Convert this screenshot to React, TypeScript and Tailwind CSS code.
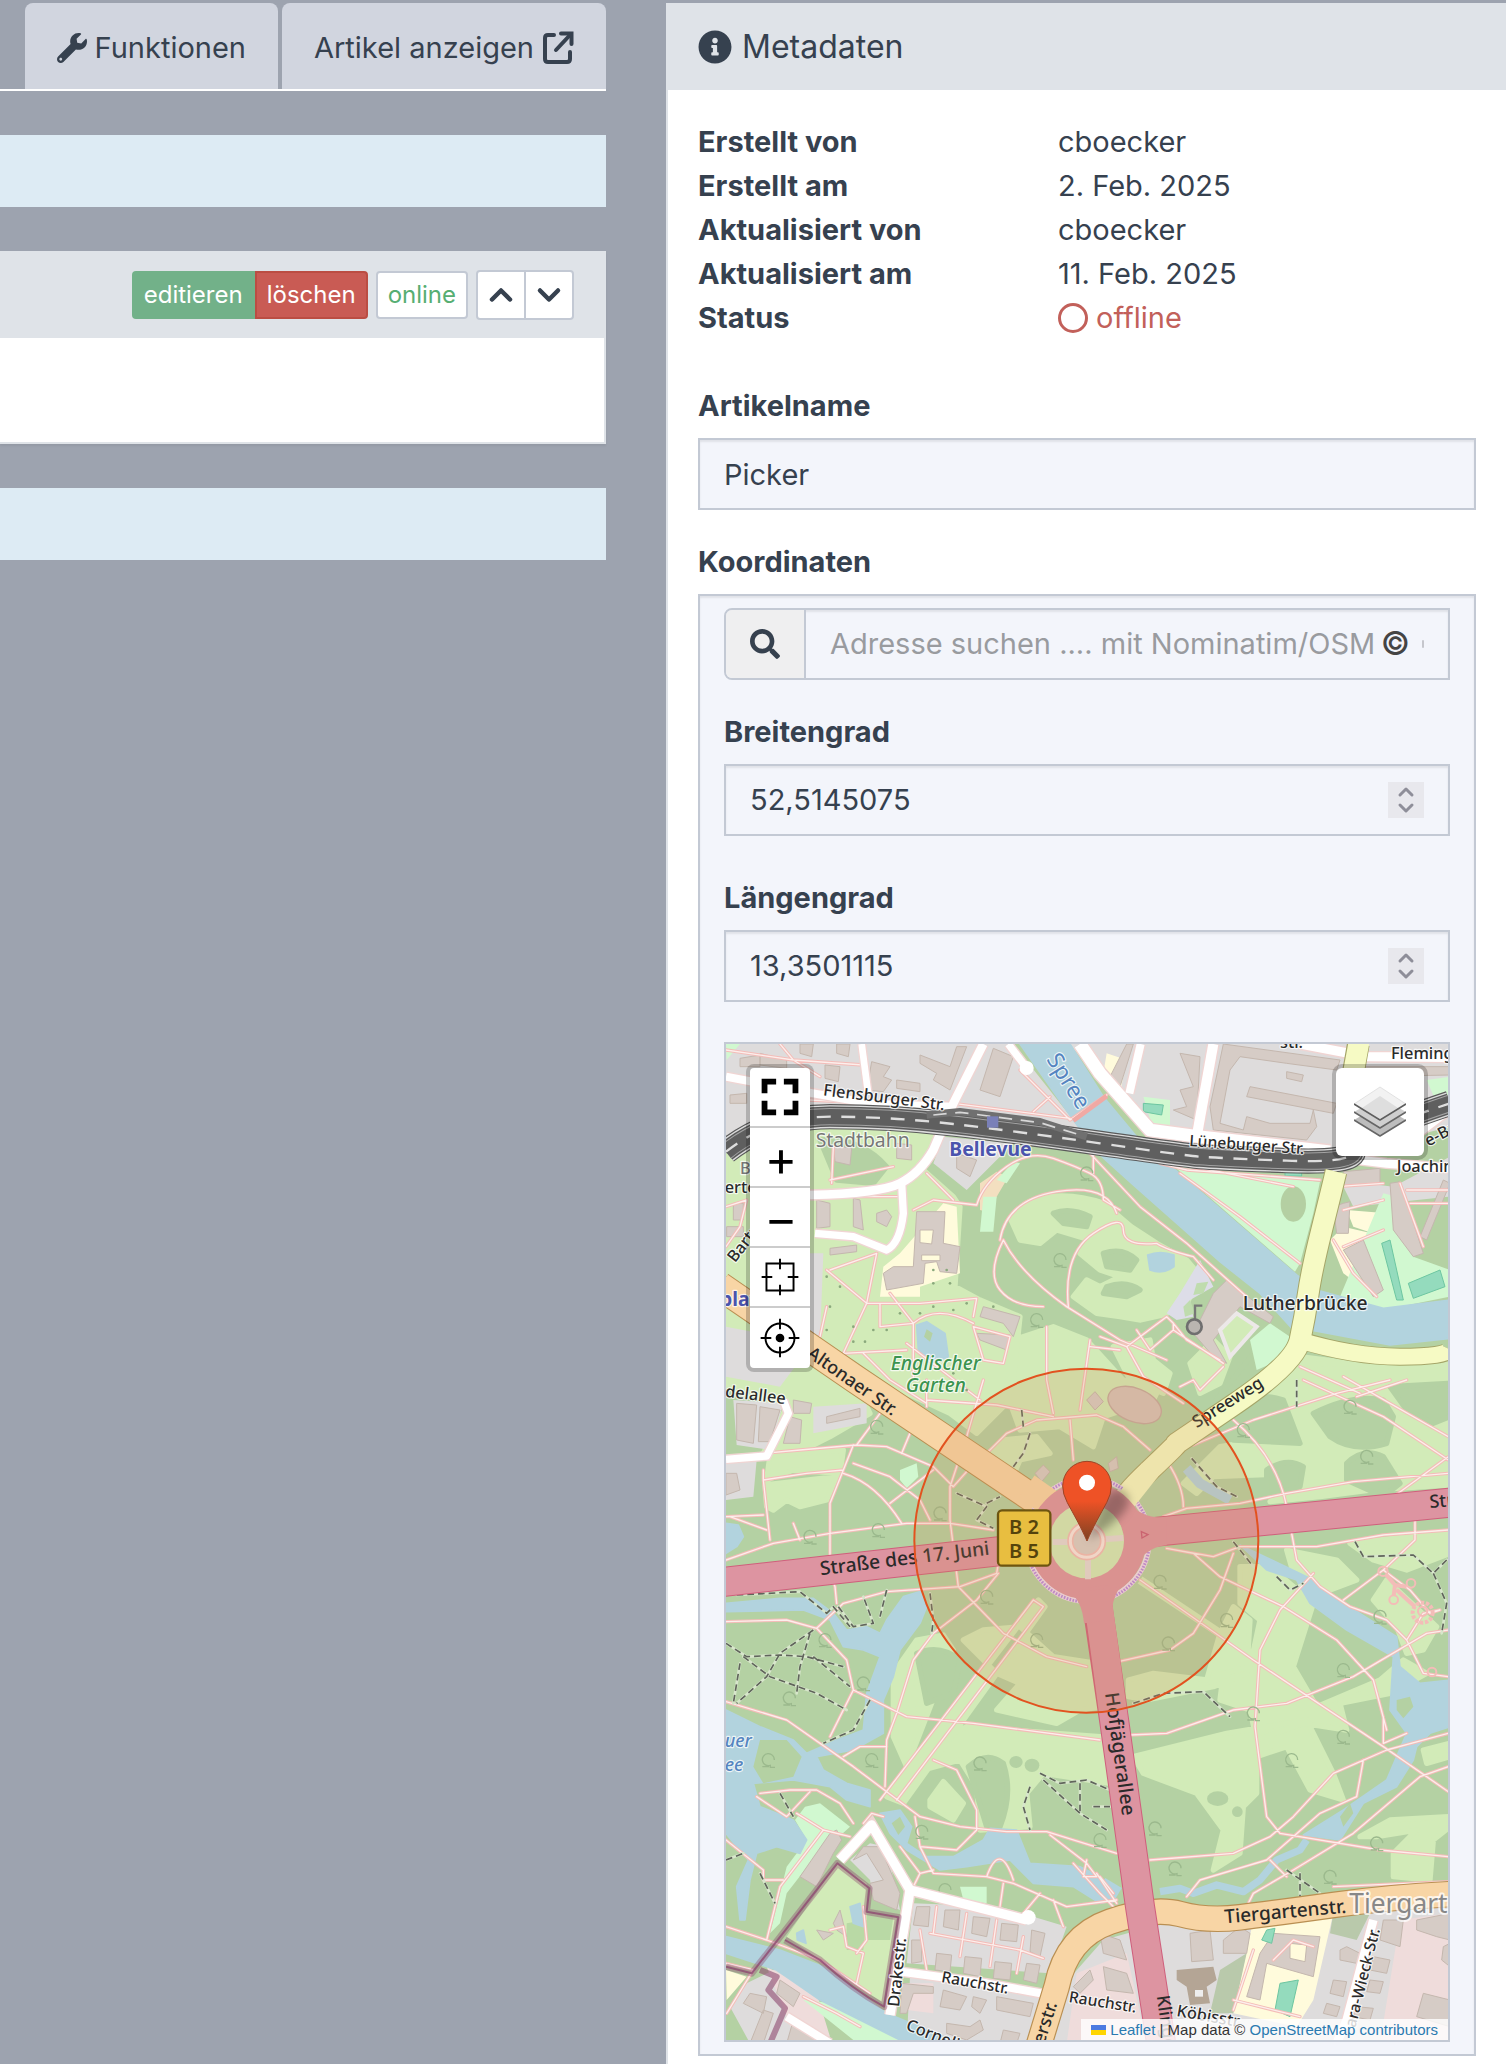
import React from "react";
import { FaWrench, FaInfoCircle, FaSearch } from "react-icons/fa";
import { ChevronDown, ChevronUp } from "lucide-react";

const meta = [
  ["Erstellt von", "cboecker"],
  ["Erstellt am", "2. Feb. 2025"],
  ["Aktualisiert von", "cboecker"],
  ["Aktualisiert am", "11. Feb. 2025"],
];

function ExternalIcon() {
  return (
    <svg viewBox="0 0 32 34" className="h-[34px] w-8" fill="none" stroke="currentColor" strokeWidth="4" strokeLinejoin="round" strokeLinecap="round">
      <path d="M12 4H6Q3 4 3 7V28Q3 31 6 31H25Q28 31 28 28V21" />
      <path d="M14 19 28 4" />
      <path d="M19 2.500H29.500V13" strokeLinejoin="miter" />
    </svg>
  );
}

/* ---------- Map data (map units: three per pixel) ---------- */

const grass = [
  "M18 350 270 270 640 285 610 390 700 470 720 500 705 740 780 780 900 830 880 1020 860 1090 770 1180 690 1120 560 1060 400 950 18 700Z",
  "M18 800 130 880 300 980 420 1060 450 1120 330 1190 250 1230 130 1240 200 1100 18 1040Z",
  "M150 1245 370 1230 360 1300 220 1290 140 1320Z",
  "M135 1335 350 1310 320 1380 240 1400 200 1380 160 1410 140 1400Z",
  "M873 540Q900 480 984 470T1151 490L1234 560 1310 610 1400 660 1443 710 1400 790 1330 825 1262 840 1200 830 1130 820 1060 770 1100 720 1140 740 1200 710 1140 690 1080 640 1110 600 1010 570 960 610 900 600Z",
  "M880 900 1000 860 1100 900 1210 1020 1320 1040 1300 1080 1150 1130 1120 1220 1020 1160 900 1170 860 1060Z",
  "M1410 970 1480 900 1530 950 1500 1030 1440 1060Z",
  "M1180 920 1290 900 1300 960 1350 1000 1330 1060 1230 1020Z",
  "M780 1260 850 1200 950 1190 990 1240 900 1260 870 1330Z",
  "M1560 1100 1740 950 1900 970 2190 980V1335L1950 1350 1800 1370 1650 1385 1710 1340 1740 1300 1480 1310 1430 1360 1390 1330 1500 1220 1560 1210Z",
  "M1730 975 2190 960V1140L2110 1150Z",
  "M1700 1530 1850 1560 1910 1620 1830 1650 1760 1640 1720 1600Z",
  "M1890 1510 2190 1475V1540L2060 1590 1960 1560Z",
  "M2000 1620 2150 1760 2110 1830 2060 1840 2030 1760 1960 1680Z",
  "M1560 1580 1650 1580 1780 1690 1720 1880 1790 2000 1980 1920 2050 1860 2120 1900 2010 1960 1860 1990 1880 2070 1750 2050 1610 2100 1590 2010 1500 1980 1510 1900 1590 1880 1620 1740 1560 1690Z",
  "M1540 1700 1590 1740 1580 1900 1480 1940 1280 1980 1225 1970 1225 1920 1300 1900 1460 1920 1500 1780Z",
  "M1240 2150 1520 2080 1760 2040 1840 2200 1870 2280 1770 2250 1700 2120 1610 2150 1610 2260 1570 2300 1560 2440 1480 2490 1510 2370 1430 2260 1270 2200Z",
  "M1920 2390 2010 2340 2190 2330V2360L2140 2400 2130 2520 2020 2510 2020 2440 2090 2370 1970 2390Z",
  "M2110 2130 2190 2110V2150L2120 2170Z",
  "M955 1680 500 2270 550 2290 975 1700Z",
  "M520 1900 590 1800 670 1785 700 1830 610 1870 590 1930 620 2010 520 2000Z",
  "M730 1800 790 1770 900 1760 1000 1850 1130 1870 1150 2000 1080 2010 1010 2050 830 2010 900 1930 830 1900Z",
  "M610 2190 700 2080 740 2060 1140 2090 1170 2230 970 2200 920 2260 930 2360 780 2370 770 2240 720 2160Z",
  "M630 2280 670 2225 730 2290 700 2340 630 2300Z",
  "M520 1910 650 1950 600 2080 560 2180 520 2090Z",
];

const forest = [
  "M1780 1120Q1900 1060 1990 1080L2020 1130 2000 1210Q1900 1240 1830 1190Z",
  "M1880 1270Q1930 1220 1990 1250L2040 1330 1990 1370 1880 1320Z",
  "M2010 1040 2190 1030V1130L2140 1150 2060 1110Z",
  "M1540 1110Q1600 1050 1690 1080L1740 1210 1540 1200Z",
  "M1640 1290Q1700 1250 1750 1280L1740 1340 1640 1370Z",
  "M745 2180Q800 2130 850 2170Q880 2260 840 2360H800Z",
  "M590 1840Q660 1810 720 1860L700 1960 620 1990Z",
  "M1600 940 1720 960 1590 1080 1480 1090Z",
  "M300 300Q420 290 500 380L460 430 350 420Z",
  "M1000 520Q1050 500 1110 530L1100 560 1030 550Z",
  "M1150 640Q1210 620 1250 660L1230 690 1160 680Z",
  "M1160 740Q1220 720 1260 750L1220 770 1150 760Z",
];

const mint = [
  "M1340 360 1500 395 1800 425 1780 520 1740 670 1725 695Z",
  "M1270 170 1350 180 1350 260 1300 270Z",
  "M1590 900 1650 850 1710 890 1680 960 1610 990Z",
  "M1990 460 2030 470 2080 650 2190 690V770L1990 810 1860 770Z",
  "M780 575 790 470 830 470 820 575Z",
  "M830 420 880 365 900 370 860 430Z",
  "M255 2300 300 2290 390 2360 270 2470 200 2560 180 2650 150 2680 200 2480 260 2400 225 2340Z",
  "M250 2880 340 2890 560 3000H400Z",
  "M720 2540 800 2540 800 2590 730 2580Z",
  "M540 1290 590 1270 595 1310 560 1345 540 1320Z",
  "M18 12H60L20 60Z",
  "M2120 120 2190 110V160L2150 190Z",
];

const greys = [
  "M18 12H880L1060 240 1130 290 270 200 18 320Z",
  "M670 290 880 310 740 450 640 370Z",
  "M1050 12H2190V260L1840 350 1330 340 1180 170Z",
  "M1860 420 2020 440 2190 350V470L1900 500Z",
  "M18 860 120 880 240 960 180 1040 18 1010Z",
  "M40 1080 190 1090 150 1230 50 1215Z",
  "M280 1100 440 1090 440 1150 280 1180Z",
  "M18 1260 110 1260 100 1370 18 1380Z",
  "M580 2590 840 2600 1040 2660 990 2800 560 2770Z",
  "M1330 2650 1820 2610 2190 2580V3010H560L570 2810 1000 2870 1150 2700Z",
  "M390 2460 450 2410 500 2420 540 2610 460 2580 450 2520Z",
  "M80 2830 180 2780 270 2870 240 3010H90L30 2900Z",
  "M270 640 310 640 300 900 270 900Z",
];

const pinks = [
  "M550 2830 640 2830 640 2920 560 2910Z",
  "M2040 2640 2190 2620V3010H1980Z",
  "M1070 2800 1220 2740 1280 3010H1040Z",
  "M140 2780 290 2860 330 2990 220 2980Z",
];

const sands = [
  "M670 490 710 500 720 700 600 740 600 770 480 770 490 680 540 640Z",
  "M1830 600 1870 560 2000 590 2030 700 1990 790 1870 700Z",
  "M1880 510 2000 520 1990 590 1900 560Z",
  "M1600 2640 1840 2620 1780 2880 1730 2960 1540 2920Z",
  "M18 2790 80 2810 20 2880Z",
  "M1160 40 1220 60 1200 160 1150 100Z",
];

const orchard = ["M780 430 830 395 865 410 830 470 815 520 780 510Z"];

const water = [
  "M900 12H1050L1150 170 1250 290 1320 350 1730 705 1790 750 1990 805 2190 780V895L2010 915 1770 870 1720 870 1620 760 1500 665 1240 435 1140 345 1060 240Z",
  "M590 855 620 845 675 880 685 950 640 970 595 930Z",
  "M1283 645Q1320 630 1362 645V680Q1330 705 1290 690Z",
  "M18 1690 180 1675 280 1675 340 1720 380 1770 440 1760 480 1780 500 1740 550 1670 600 1655 620 1700 600 1750 540 1830 520 1910 490 1980 490 2080 400 2130 290 2150 310 2190 380 2230 450 2250 450 2300 380 2280 330 2240 220 2220 100 2230 120 2300 220 2340 260 2400 240 2440 170 2420 110 2440 90 2520 75 2640 60 2640 50 2540 85 2460 50 2420 18 2380V2010L120 2060 220 2100 260 2140 350 2100 430 2070 440 1960 480 1850 430 1830 370 1820 330 1740 250 1710 18 1715Z",
  "M18 1450 55 1455 70 1490 50 1520 18 1540Z",
  "M480 2320 540 2310 575 2360 560 2410 620 2450 700 2450 790 2400 810 2365 890 2370 930 2470 1080 2480 1140 2510 1190 2580 1140 2590 1060 2540 940 2530 870 2460 740 2480 660 2490 560 2430 510 2380Z",
  "M18 2690 180 2730 310 2780 500 2920 720 3010H560L300 2880 170 2790 18 2740Z",
  "M1560 1515 1760 1610 1840 1670 2030 1790 2040 1880 2100 1930 2190 1920V2060L2130 2080 2090 2120 2080 2160 2030 2240 1930 2290 1860 2400 1750 2385 1870 2310 2000 2220 2030 2150 2060 2080 2010 2010 2020 1850 1880 1770 1770 1690 1730 1620 1640 1590Z",
  "M390 2600 420 2590 430 2660 400 2650Z",
  "M230 2680 250 2670 258 2710 232 2700Z",
];

const islands = [
  "M100 2180 120 2100 200 2100 245 2150 220 2210 130 2230Z",
  "M620 868 638 880 630 905 612 890Z",
  "M2030 1980 2070 1970 2080 2000 2050 2035 2030 2010Z",
  "M1860 2330 1890 2290 1900 2320 1870 2360Z",
  "M515 2350 540 2330 555 2360 535 2385Z",
];

const buildings = [
  "M455 65 510 80 490 110 515 120 490 155 440 150Z",
  "M600 45 690 80 710 20 740 20 690 150 640 120 650 100 600 70Z",
  "M530 120 600 130 600 155 530 145Z",
  "M820 25 880 50 840 170 780 150Z",
  "M60 55 120 45V80H60Z", "M120 40 200 60 200 85 120 75Z", "M240 12 280 12 275 50 240 40Z", "M350 12 390 12 385 50 350 40Z", "M315 75 360 80 355 125 315 115Z", "M30 165 80 160V190H30Z",
  "M340 315 395 325 390 375 345 365Z", "M530 310 575 315 575 360 530 355Z", "M710 340 770 360 750 410 710 385Z",
  "M290 480 330 490 330 560 290 565Z", "M400 475 420 480 430 570 400 560Z", "M470 520 500 510 515 530 500 560 470 545Z", "M330 625 410 615 410 635 330 645Z",
  "M590 515 675 515 670 610 720 620 710 700 660 695 650 665 615 670 610 730 500 750 490 700 520 680 580 680Z",
  "M770 880 870 885 860 930 780 900Z", "M790 800 900 830 880 890 850 850 780 830Z", "M20 560 70 560V590H20Z", "M40 490 70 490V540H40Z",
  "M1510 12 1500 60 1470 200 1480 270 1760 300 1790 260 1780 210 1770 250 1650 250 1580 230 1570 270 1500 250 1530 90 1560 50 1700 70 1850 90 1860 60Z",
  "M1590 140 1850 190 1840 220 1580 170Z", "M1700 95 1750 105 1745 125 1700 115Z", "M1380 40 1440 50 1430 240 1360 210 1400 200 1380 150 1420 140Z", "M1220 12 1240 12 1200 140 1170 110Z",
  "M1870 490 1890 485 1885 580 1850 580 1840 500Z", "M1870 630 1930 600 1990 750 1960 770Z", "M2010 430 2040 425 2110 640 2080 650 2020 570Z", "M2170 420 2190 430 2120 600 2100 590Z", "M1870 395 1980 385 1980 430 1870 440Z", "M1930 80 2190 80 2190 105 1930 110Z",
  "M1480 760 1520 720 1660 830 1650 850 1560 800 1480 900 1520 970 1480 950 1420 880Z",
  "M50 1090 110 1095 100 1210 50 1200Z", "M120 1100 180 1110 150 1205 115 1205Z", "M220 1080 275 1090 270 1120 220 1120Z", "M320 1130 420 1105 420 1130 320 1150Z", "M18 1300 50 1300 60 1350 18 1365Z", "M210 1130 245 1140 240 1210 190 1210Z",
  "M945 1300 970 1275 990 1295 965 1325Z", "M1165 1270 1190 1250 1195 1285 1170 1295Z", "M1100 1080 1125 1055 1150 1085 1125 1110Z",
  "M330 2380 350 2370 365 2400 340 2440 290 2540 240 2510Z", "M430 2420 480 2420 540 2560 530 2610 460 2580 450 2530 490 2520 440 2440 400 2460Z",
  "M340 2650 360 2610 380 2690 350 2670Z", "M290 2670 340 2680 310 2700Z",
  "M590 2600 630 2600 625 2660 580 2655Z", "M675 2610 720 2610 715 2670 670 2660Z", "M760 2630 810 2635 800 2690 755 2680Z", "M845 2650 895 2655 890 2705 840 2700Z", "M935 2670 975 2680 960 2750 930 2735Z", "M575 2700 605 2700 605 2765 575 2770Z", "M650 2740 695 2745 690 2795 645 2790Z", "M735 2750 785 2755 780 2810 730 2800Z", "M825 2765 875 2770 870 2820 820 2815Z", "M920 2770 960 2775 950 2830 910 2820Z",
  "M545 2830 640 2840 640 2860 580 2860 560 2920 540 2920Z", "M670 2850 740 2870 720 2910 660 2900Z", "M760 2870 800 2880 780 2920 755 2900Z", "M830 2870 940 2890 930 2930 830 2910Z", "M680 2950 750 2960 780 2940 790 2970 740 3000 680 2980Z", "M850 2970 900 2980 890 3010H840Z",
  "M1140 2680 1200 2700 1220 2760 1150 2740Z", "M1060 2840 1110 2790 1120 2820 1080 2860Z", "M1150 2780 1220 2800 1240 2860 1160 2850Z",
  "M1410 2680 1470 2670 1480 2760 1415 2765Z", "M1510 2700 1560 2660 1590 2680 1580 2740 1510 2740Z",
  "M1660 2680 1800 2690 1780 2810 1640 2770 1620 2880 1580 2870 1620 2740Z", "M1860 2730 1880 2720 1920 2740 1910 2770 1860 2760Z", "M1960 2750 2010 2760 2000 2800 1950 2790Z", "M1840 2820 1880 2825 1870 2870 1830 2860Z", "M1950 2820 1990 2825 1980 2860 1940 2855Z", "M1820 2890 1860 2900 1850 2930 1810 2920Z", "M1910 2900 1960 2905 1950 2940 1900 2930Z", "M1990 2640 2050 2640 2040 2720 1980 2700Z", "M2090 2640 2190 2620V2700L2150 2690 2090 2670Z", "M2110 2860 2190 2880V2960L2090 2930Z", "M2170 2720 2190 2710V2780L2165 2760Z",
  "M90 2860 140 2870 130 2920 70 2890Z", "M180 2820 240 2860 220 2900 170 2860Z", "M220 2940 320 2990 310 3010H200Z", "M130 2910 160 2920 130 3010H90Z",
];

const courts = ["M1270 190 1330 195 1325 225 1270 215Z", "M2065 730 2160 690 2175 740 2080 775Z", "M1695 393H1745V408H1695Z", "M1640 2670 1665 2665 1655 2710 1625 2700Z", "M1680 2830 1735 2820 1710 2930 1665 2910Z", "M1985 610 2010 600 2050 780 2030 780Z"];

const whiteRoads: [string, number][] = [
  ["M790 12 700 190 640 330Q600 400 540 430T270 465", 26],
  ["M545 430 550 520Q540 610 500 630L400 590 285 580", 22],
  ["M18 110 280 160 460 192 700 200", 24],
  ["M425 12 445 165", 20],
  ["M865 12 920 84", 22],
  ["M1080 12 1140 100 1290 270 1440 290 1830 335", 38],
  ["M1480 12 1430 290", 30],
  ["M1262 12 1228 160", 24],
  ["M1740 12 1940 50 2190 52", 28],
  ["M1840 350 2000 370 2190 385", 26],
  ["M2030 330 2190 210", 22],
  ["M18 1258 140 1248 205 1120 190 1080", 22],
  ["M360 2460 455 2355 570 2550 920 2640", 28],
  ["M570 2550 510 2925", 28],
  ["M545 2795 800 2830 990 2865", 24],
  ["M200 2930 330 3010", 24],
  ["M1960 2640 1880 2940 1850 3010", 26],
];

const paths = [
  "M18 30 220 60 430 75", "M180 12 220 60 300 110", "M270 180 480 190 700 190 1050 235", "M900 90 1050 240 1160 165", "M990 170 940 215",
  "M340 320 335 430", "M330 420 520 380", "M620 400 700 480", "M18 500 80 480 60 560 18 620", "M290 470 540 470",
  "M580 510 640 480 770 495Q790 430 860 380T1000 355 1110 400 1150 480L1200 510",
  "M840 600Q860 480 1010 455T1190 520",
  "M850 600Q800 700 840 750T970 800", "M850 600Q900 700 1040 800L1200 900 1340 960",
  "M1045 800Q1030 640 1120 580T1210 570 1310 610Q1340 630 1420 650L1480 720",
  "M1120 340 1120 400", "M1110 340 1260 500 1400 610 1580 770",
  "M1380 400 1560 530 1740 670", "M1370 370 1720 440", "M1320 370 1400 390 1800 420", "M1850 440 1990 430",
  "M270 900 300 890 320 800", "M320 690 440 790 600 790 770 775 760 830", "M440 790 370 940 560 930", "M470 640 440 790", "M480 790 480 860 580 850Q650 790 760 850", "M510 760 580 850", "M580 850V930 1020", "M370 940 430 1040", "M560 910 780 1080", "M330 690 470 640", "M760 860 870 890 850 970 790 960Z",
  "M430 940 510 1020 620 1090", "M980 860 980 1020 1000 1120", "M1110 900 1080 1110", "M1110 920 1200 930",
  "M1140 890 1220 920 1340 830 1360 850", "M1220 920 1270 1010 1390 1090", "M1250 870 1290 930 1360 870 1510 970", "M1360 870 1360 850 1400 900 1500 960", "M1380 1040 1420 1020 1440 1050 1510 980",
  "M130 1240 240 1230 410 1215 500 1220 640 1280 700 1340 780 1250", "M130 1290 130 1320 260 1300 370 1290", "M400 1215 330 1390 330 1600 345 1640 350 1690", "M480 1120 410 1215", "M570 1180 545 1240", "M400 1270 510 1310 600 1380 630 1440", "M370 1300Q470 1330 545 1450", "M510 1390 640 1290",
  "M18 1560 160 1510 330 1480 560 1450 690 1450 820 1470", "M690 1340 690 1440 715 1640 850 1780 980 1850 1100 1880", "M130 1320 150 1500", "M18 1430 130 1425", "M30 1430 140 1470", "M220 1450 240 1500",
  "M620 1080 830 1095 1000 1130", "M800 1240 860 1180 950 1140 1130 1125 1210 1160 1290 1230", "M790 1020 740 1190 690 1340", "M1050 1140 1060 1260", "M620 1020 620 1100",
  "M1540 1140Q1670 1250 1700 1400", "M1420 1215 1600 1140 1850 1060 2010 1020", "M1750 1020 1990 1130 2185 1260", "M1870 1010 2185 1190", "M2185 1250 2020 1370", "M1345 1270Q1390 1340 1390 1400", "M1330 1430 1400 1405 1560 1390 1700 1360 1900 1325 2185 1300",
  "M1740 980 1920 1060", "M2060 1020 1910 1070",
  "M1340 1525 1480 1550 1560 1520 1790 1520 1990 1485 2185 1470", "M1340 1525 1420 1540 1500 1610 1690 1700 1850 1800 1960 1920 2000 2070", "M1540 1540 1500 1650 1420 1780 1350 1830 1195 1865", "M1715 1480 1730 1560 1800 1640 1890 1700 2000 1740 2060 1800 2110 1900 2185 1910", "M1780 1600 1680 1710 1620 1830 1605 2060 1640 2330 1680 2380 1980 2430 2185 2450", "M1260 1620 1600 1860 1900 2060 1990 2120 2185 2255",
  "M2085 1440 2085 1500 1990 1590 1870 1680", "M1990 1590 2070 1650 2130 1720 2160 1710 2110 1720 2060 1800", "M2185 1770 2120 1780 1900 1910 1700 1990 1540 2010 1340 2080 1230 2085", "M2185 2080 2000 2130 1840 2200 1720 2330 1650 2390 1540 2440 1290 2460", "M1930 2160 1910 2270 1800 2320 1640 2460 1440 2520 1400 2570", "M2185 2180 2100 2210 1900 2380 1720 2490 1600 2560 1580 2600", "M1650 2460 1700 2510", "M1840 2540 2185 2525", "M1990 2030 1990 2110 2060 2080",
  "M18 1745 200 1740 290 1765 380 1860 400 1950 330 2090", "M290 1765 370 1690 500 1655 720 1640 830 1600 835 1570", "M835 1600 770 1680 640 1780 580 1860 530 2020 500 2100 495 2240", "M400 1950 560 2030 760 2050 1140 2100",
  "M18 1985 200 2040 400 2180 520 2270 600 2330 720 2360 860 2375 980 2375 1190 2440", "M370 2150 420 2120 500 2120",
  "M940 1680 480 2280", "M970 1700 530 2280", "M940 1680 970 1700",
  "M120 2260 210 2250 290 2250 360 2290 400 2350", "M110 2270 200 2330 270 2255", "M230 2320 310 2370", "M390 2390 310 2370 180 2540 140 2700", "M18 2400 130 2490 130 2520 190 2520", "M430 2350 455 2320 490 2330",
  "M640 2160 710 2190 770 2310 770 2370 710 2430 600 2420", "M585 2330 600 2420 640 2500 800 2510 880 2530 1040 2600 1190 2580", "M540 2420 600 2500 640 2490", "M580 2540 600 2500", "M990 2385 1100 2470 1130 2510 1090 2510 1100 2460", "M1130 2500 1190 2590", "M850 2530 840 2600", "M800 2510Q840 2400 880 2520", "M910 2620 960 2560", "M1000 2580 1030 2660",
  "M630 2680 900 2730 970 2755", "M650 2600 640 2680", "M740 2620 720 2750", "M830 2640 810 2780", "M910 2690 890 2800", "M600 2670 620 2790",
  "M18 2660 140 2700 300 2760 450 2860", "M18 2770 100 2790 20 2920", "M1060 2470 1140 2560 1200 2620", "M1140 2510 1180 2560",
  "M1600 2730 1540 2910", "M1540 2880 1740 2930", "M1660 2760 1720 2700 1780 2720", "M330 2670 370 2660 380 2720 430 2740 410 2830", "M430 2600 440 2700 410 2740", "M250 2870 350 2920 420 2960",
  "M1870 510 1990 480", "M1870 620 1990 570", "M1840 600 1900 700 1970 770", "M2070 490 2190 490", "M2040 430 2110 620", "M2060 450 2190 450",
];

const tracks = [
  "M50 1665 240 1655 320 1720 340 1700 390 1760", "M355 1700 400 1760 460 1750 430 1670", "M500 1650 480 1730", "M630 1660 640 1740 635 1780", "M18 1810 80 1850 180 1845 260 1850 370 1880", "M280 1770 180 1840 140 1910 50 1990", "M70 1850 150 1910 290 1960 380 2010", "M270 1780 240 1880 230 1960", "M60 1870 40 1990", "M450 1980 400 2070 310 2110", "M280 1850 390 1940",
  "M710 1360 800 1400 770 1440 820 1465", "M905 1110 910 1160", "M930 1180 910 1240 880 1280", "M800 1390 840 1370",
  "M960 2200 1020 2230 1100 2220 1170 2250", "M930 2240 910 2300 930 2370", "M970 2220 1080 2320 1160 2370", "M1080 2230 1080 2320", "M1120 2300 1170 2300",
  "M1415 1255 1490 1340 1550 1370", "M1540 1505 1600 1580", "M1670 1610 1710 1650 1750 1630", "M1905 1505 1930 1550 2080 1545 2140 1600 2180 1560", "M2140 1600 2180 1690 2165 1780", "M1240 1990 1330 1960 1450 1955 1530 2030", "M1730 1020V1100", "M1740 2500 1740 2570", "M1700 2490 1800 2560", "M180 2260 220 2330", "M120 2500 165 2590", "M18 2460 70 2440",
];

const trees: [number, number][] = [
  [470, 1160], [660, 1420], [270, 1490], [475, 1470], [800, 1670], [950, 1800], [430, 1930], [208, 1975], [315, 1800], [145, 2160], [455, 2160], [780, 2170], [605, 2375], [675, 2550], [1140, 2400], [1320, 1625], [1345, 1810], [1520, 1740], [1890, 1100], [1570, 1170], [1940, 1250], [1980, 1730], [1870, 1890], [1870, 2090], [1715, 2160], [1365, 2485], [1830, 2510], [1970, 2410], [1305, 2365], [1600, 2020], [1100, 400], [1020, 660], [950, 840],
];

const lawnDots: [number, number][] = [
  [330, 800], [320, 870], [400, 860], [400, 905], [435, 905], [460, 870], [500, 870], [540, 820], [600, 820], [640, 800], [700, 810], [740, 790], [820, 800], [700, 1000], [740, 1050], [520, 970], [640, 690], [680, 690], [640, 730], [690, 730], [320, 710], [360, 740],
];

const railway = "M18 335Q150 230 330 230T700 252 1140 310 1440 350 1700 362 1900 330 2190 190";

function Labels() {
  return (
    <g fontFamily='"Noto Sans", sans-serif' fontSize="49" fontWeight="500" fill="#2a2a2a" stroke="#fff" strokeOpacity="0.75" strokeWidth="7" strokeLinejoin="round" paintOrder="stroke">
      <text x="308" y="166" transform="rotate(7 308 166)">Flensburger Str.</text>
      <text x="287" y="322" fontSize="58" fontWeight="400" fill="#777">Stadtbahn</text>
      <text x="688" y="347" fontSize="58" fontWeight="700" fill="#4b54ad">Bellevue</text>
      <text x="978" y="58" fontSize="68" fontWeight="400" fill="#5584c0" transform="rotate(58 978 58)">Spree</text>
      <text x="512" y="990" fontSize="58" fontStyle="italic" fill="#3b9350">Englischer</text>
      <text x="557" y="1057" fontSize="58" fontStyle="italic" fill="#3b9350">Garten</text>
      <text x="1407" y="318" fontSize="47" transform="rotate(4 1407 318)">Lüneburger Str.</text>
      <text x="1680" y="24">str.</text>
      <text x="2013" y="57">Fleming</text>
      <text x="2030" y="397">Joachim</text>
      <text x="2125" y="320" transform="rotate(-28 2125 320)">e-Brücke</text>
      <text x="1568" y="810" fontSize="58">Lutherbrücke</text>
      <text x="14" y="460">erter</text>
      <text x="60" y="402" fill="#777">B</text>
      <text x="45" y="670" transform="rotate(-52 45 670)">Bartn</text>
      <text x="0" y="797" fontSize="58" fontWeight="700" fill="#4b54ad">platz</text>
      <text x="14" y="1070" transform="rotate(7 14 1070)">delallee</text>
      <text x="258" y="948" fontSize="54" stroke="none" transform="rotate(35 258 948)">Altonaer Str.</text>
      <text x="1430" y="1165" fontSize="51" stroke="none" transform="rotate(-32 1430 1165)">Spreeweg</text>
      <text x="302" y="1606" fontSize="58" stroke="none" transform="rotate(-7 302 1606)">Straße des 17. Juni</text>
      <text x="2130" y="1404" fontSize="54" stroke="none" transform="rotate(-5 2130 1404)">Straße</text>
      <text x="1155" y="1960" fontSize="58" stroke="none" transform="rotate(82 1155 1960)">Hofjägerallee</text>
      <text x="1310" y="2868" fontSize="54" stroke="none" transform="rotate(82 1310 2868)">Klingel</text>
      <text x="14" y="2120" fontSize="54" fontStyle="italic" fill="#5584c0">uer</text>
      <text x="14" y="2192" fontSize="54" fontStyle="italic" fill="#5584c0">ee</text>
      <text x="537" y="2902" transform="rotate(-84 537 2902)">Drakestr.</text>
      <text x="662" y="2826" fontSize="47" transform="rotate(10 662 2826)">Rauchstr.</text>
      <text x="1045" y="2886" fontSize="47" transform="rotate(9 1045 2886)">Rauchstr.</text>
      <text x="555" y="2968" transform="rotate(22 555 2968)">Corneliusstr.</text>
      <text x="972" y="3015" fontSize="54" stroke="none" transform="rotate(-72 972 3015)">erstr.</text>
      <text x="1515" y="2650" fontSize="57" stroke="none" transform="rotate(-5 1515 2650)">Tiergartenstr.</text>
      <text x="1888" y="2618" fontSize="79" fontWeight="400" fill="#888" strokeWidth="12">Tiergarten</text>
      <text x="1906" y="2965" fontSize="47" transform="rotate(-76 1906 2965)">ara-Wieck-Str.</text>
      <text x="1368" y="2928" transform="rotate(10 1368 2928)">Köbisstr.</text>
    </g>
  );
}

function MapDrawing() {
  return (
    <svg viewBox="18 12 2166 2988" preserveAspectRatio="xMidYMid slice" className="block h-full w-full" role="img" aria-label="Karte">
      <rect x="18" y="12" width="2166" height="2988" fill="#b4d1a3" />
      <g strokeLinejoin="round" strokeWidth="16">
        <path d={grass.join("")} fill="#d2ebb8" stroke="#d2ebb8" />
        <path d={forest.join("")} fill="#b4d1a3" stroke="#b4d1a3" />
      </g>
      <path d={greys.join("")} fill="#dedcdc" />
      <path d={pinks.join("")} fill="#efdcdb" />
      <path d={sands.join("")} fill="#fffbdc" />
      <path d={orchard.join("")} fill="#f3dfc0" />
      <path d={mint.join("")} fill="#d1f8d0" />
      <ellipse cx="1720" cy="492" rx="38" ry="53" fill="#b4cfa2" />
      <ellipse cx="888" cy="2166" rx="20" ry="18" fill="#b4d1a3" />
      <ellipse cx="936" cy="2176" rx="22" ry="20" fill="#b4d1a3" />
      <ellipse cx="1493" cy="2276" rx="32" ry="22" fill="#b4d1a3" />
      <circle cx="1552" cy="2315" r="16" fill="#b4d1a3" />
      <path d="M1500 2790 1580 2740 1540 2920H1470ZM1840 2620 1960 2600 1910 2700 1830 2680Z" fill="#b9c9ab" />
      <path d="M350 2470 440 2530 440 2620 530 2630 490 2890 200 2690Z" fill="#d2ebb8" />
      <path d="M440 2620 520 2630 510 2700 440 2700ZM380 2650 440 2640 430 2730 380 2730Z" fill="#b9d9a5" />
      <path d={water.join("")} fill="#b2d3de" stroke="#b2d3de" strokeWidth="5" strokeLinejoin="round" />
      <g fill="none" stroke="#b2d3de" strokeLinejoin="round">
        <path d="M1400 1285 1440 1330 1530 1380" strokeWidth="30" />
        <path d="M1760 2400 1740 2430 1670 2460 1620 2520 1570 2555 1490 2535 1420 2560 1380 2545 1320 2555" strokeWidth="22" />
        <path d="M1140 2540 1190 2570" strokeWidth="60" />
      </g>
      <path d={islands.join("")} fill="#b4d1a3" />
      <path d={buildings.join("")} fill="#d6ccc6" stroke="#c4b7ae" strokeWidth="3" />
      <path d="M600 570 640 570 635 612 600 608ZM605 645 660 645V662H605ZM1710 2710 1760 2715 1755 2765 1710 2755Z" fill="#fffbdc" stroke="#c4b7ae" strokeWidth="3" />
      <path d="M1370 2790 1480 2780 1490 2820 1460 2840 1470 2890 1410 2895 1400 2840 1370 2820Z" fill="#b4a595" />
      <path d="M1425 2850h24v20h-24Z" fill="#eee" />
      <path d="M1500 870 1550 820 1610 860 1530 950Z" fill="#d2ebb8" stroke="#ece8e8" strokeWidth="12" />
      <path d={courts.join("")} fill="#94dbbd" stroke="#6dc6a1" strokeWidth="3" />
      <ellipse cx="1244" cy="1095" rx="84" ry="50" transform="rotate(22 1244 1095)" fill="#d6c3b9" stroke="#c4aba0" strokeWidth="4" />
      <path d="M1440 660 1480 740 1410 780 1420 830 1370 840 1340 820 1380 760Z" fill="#dddde8" />
      <path d="M1430 730 1465 725 1450 760 1420 765ZM1390 800 1410 780 1425 820 1395 830Z" fill="#bfdcae" />

      <path d="M1260 1620 1620 1860" fill="none" stroke="#d2ebb8" strokeWidth="26" />
      <g fill="none" strokeLinejoin="round" strokeLinecap="round">
        <path d={paths.join("")} stroke="#f4bcb8" strokeWidth="10" />
        <path d={paths.join("")} stroke="#fcefec" strokeWidth="4" />
        <path d={tracks.join("")} stroke="#d7e6cb" strokeWidth="8" />
        <path d={tracks.join("")} stroke="#60655b" strokeWidth="5" strokeDasharray="20 12" strokeLinecap="butt" />
      </g>

      <g fill="none" stroke="#9bb98d" strokeWidth="4">
        {trees.map(([x, y]) => (
          <path key={`${x}-${y}`} d={`M${x - 18} ${y + 20}H${x + 2}M${x + 18} ${y}A18 18 0 1 0 ${x + 6} ${y + 16}V${y + 22}H${x + 20}`} />
        ))}
      </g>
      <g fill="#8aa87c">
        {lawnDots.map(([x, y]) => (
          <circle key={`${x}-${y}`} cx={x} cy={y} r="4" />
        ))}
      </g>

      <g fill="none" strokeLinecap="butt">
        {whiteRoads.map(([d, w]) => (
          <path key={d} d={d} stroke="#f0d5d3" strokeWidth={w + 8} />
        ))}
        {whiteRoads.map(([d, w]) => (
          <path key={d} d={d} stroke="#fff" strokeWidth={w} strokeLinejoin="round" />
        ))}
        <circle cx="920" cy="84" r="21" fill="#fff" />
        <circle cx="925" cy="2632" r="22" fill="#fff" />
      </g>

      <g fill="none" strokeLinejoin="round">
        <path d={railway} stroke="#5a5a5a" strokeWidth="76" />
        <path d={railway} stroke="#dcdcdc" strokeWidth="69" />
        <path d={railway} stroke="#5a5a5a" strokeWidth="61" />
        <path d={railway} stroke="#a3a3a3" strokeWidth="52" />
        <path d={railway} stroke="#5f5f5f" strokeWidth="46" />
        <path d={railway} stroke="#dedede" strokeWidth="7" strokeDasharray="42 32" />
        <path d="M620 225 720 215 960 245 1100 290" stroke="#707070" strokeWidth="22" />
        <path d="M640 225 720 217 960 248 1080 285" stroke="#d8d8d8" strokeWidth="5" strokeDasharray="40 26" />
      </g>
      <rect x="801" y="229" width="34" height="34" fill="#7a80b8" />
      <path d="M1060 242 1160 168" stroke="#f0a9a4" strokeWidth="14" />

      <g fill="none" strokeLinejoin="round">
        <path d="M1915 12Q1900 100 1885 180M1848 395Q1835 450 1805 570T1765 760 1740 900 1540 1095 1370 1210 1290 1290 1220 1380" stroke="#a5a568" strokeWidth="68" />
        <path d="M1740 900Q1900 950 2040 950T2190 928" stroke="#a5a568" strokeWidth="54" />
        <path d="M1920 -10Q1900 100 1885 180M1848 395Q1835 450 1805 570T1765 760 1740 900 1540 1095 1370 1210 1290 1290 1210 1390" stroke="#f6fac4" strokeWidth="62" />
        <path d="M1735 900Q1900 950 2040 950T2190 928" stroke="#f6fac4" strokeWidth="48" />

        <path d="M0 738 410 1020 970 1396" stroke="#b98f52" strokeWidth="88" />
        <path d="M0 738 410 1020 970 1396" stroke="#f8d5a5" strokeWidth="82" />
        <path d="M955 3020 1010 2840Q1040 2690 1170 2645T1380 2622 1560 2632 1840 2595 2200 2562" stroke="#b98f52" strokeWidth="80" />
        <path d="M955 3020 1010 2840Q1040 2690 1170 2645T1380 2622 1560 2632 1840 2595 2200 2562" stroke="#f8d5a5" strokeWidth="73" />

        <circle cx="1103" cy="1500" r="184" stroke="#f0dcee" strokeWidth="16" />
        <circle cx="1103" cy="1500" r="186" stroke="#b98ae2" strokeWidth="9" strokeDasharray="5 4" />
        <path d="M0 1627 330 1590 960 1520M1260 1480 2200 1387M1128 1670 1185 2060 1260 2600 1325 3020" stroke="#cf5f7c" strokeWidth="90" />
        <path d="M920 1340 1000 1396" stroke="#f8d5a5" strokeWidth="82" />
        <path d="M1290 1290 1215 1385" stroke="#f6fac4" strokeWidth="62" />
        <circle cx="1102" cy="1502" r="142" stroke="#dd94a1" strokeWidth="66" />
        <path d="M0 1627 330 1590 960 1520M1250 1481 2200 1387M1128 1640 1185 2060 1260 2600 1325 3020" stroke="#dd94a1" strokeWidth="84" />
        <path d="M1215 1380Q1270 1440 1340 1432V1516Q1270 1520 1225 1610ZM1050 1660Q1085 1680 1092 1750L1175 1740Q1170 1690 1200 1640Z" fill="#dd94a1" />
      </g>
      <circle cx="1100" cy="1503" r="112" fill="#d2ebb8" />
      <path d="M1104 1503V1618M998 1506H1090M1110 1500 1210 1494" stroke="#e4dad8" strokeWidth="18" />
      <circle cx="1100" cy="1503" r="56" fill="#f8e8e4" stroke="#f2bdb8" strokeWidth="5" />
      <circle cx="1100" cy="1503" r="42" fill="#d9cfc9" stroke="#f2bdb8" strokeWidth="5" />
      <path d="M1264 1475 1284 1484 1266 1494Z" fill="none" stroke="#c85a78" strokeWidth="4" />

      <g fill="none" stroke="#8e4a70" strokeLinejoin="round">
        <path d="M18 2780 95 2800 352 2470 448 2545 440 2615 535 2632 492 2900Q400 2850 300 2760L195 2700" strokeOpacity="0.4" strokeWidth="20" />
        <path d="M18 2780 95 2800 352 2470 448 2545 440 2615 535 2632 492 2900Q400 2850 300 2760L195 2700" strokeOpacity="0.8" strokeWidth="6" />
        <path d="M120 2790 170 2810 145 2850 195 2905 150 3010" strokeOpacity="0.6" strokeWidth="18" />
      </g>

      <g fill="none" stroke="#f4bcb8" strokeWidth="6">
        <path d="M1998 1604 2025 1635M2060 1640 2025 1635 2021 1668M2030 1650 2085 1700" strokeWidth="12" />
        <circle cx="1989" cy="1594" r="14" />
        <circle cx="2073" cy="1630" r="13" />
        <circle cx="2021" cy="1679" r="13" />
        <circle cx="2108" cy="1718" r="30" strokeWidth="12" strokeDasharray="10 5" />
        <circle cx="2108" cy="1714" r="14" />
        <circle cx="2136" cy="1896" r="13" />
      </g>
      <path d="M1425 840V797H1447" fill="none" stroke="#777" strokeWidth="7" />
      <circle cx="1423" cy="860" r="22" fill="#b9b5b0" stroke="#6f6f6f" strokeWidth="8" />

      <Labels />

      <circle cx="1099" cy="1502" r="516" fill="#d08a52" fillOpacity="0.2" stroke="#e2521f" strokeWidth="6" />

      <rect x="834" y="1411" width="157" height="166" rx="12" fill="#e8be40" stroke="#6d5510" strokeWidth="7" />
      <g fontFamily='"Noto Sans", sans-serif' fontSize="60" fontWeight="600" fill="#54430c" textAnchor="middle">
        <text x="912" y="1482">B 2</text>
        <text x="912" y="1553">B 5</text>
      </g>

      <defs>
        <linearGradient id="pin" x1="0" y1="0" x2="0" y2="1">
          <stop offset="0.5" stopColor="#ee5226" />
          <stop offset="1" stopColor="#7d4222" />
        </linearGradient>
        <filter id="soft" x="-50%" y="-50%" width="200%" height="200%">
          <feGaussianBlur stdDeviation="12" />
        </filter>
      </defs>
      <path d="M1104 1500 1150 1380Q1190 1320 1225 1370 1240 1420 1104 1500Z" fill="#000" fillOpacity="0.3" filter="url(#soft)" />
      <path d="M1101 1503C1080 1455 1062 1425 1042 1388Q1028 1362 1028 1338A73 74 0 0 1 1174 1338Q1174 1362 1160 1388C1140 1425 1122 1455 1101 1503Z" fill="url(#pin)" stroke="#9c4426" strokeWidth="3" />
      <circle cx="1101" cy="1328" r="24" fill="#fff" />
    </svg>
  );
}

const mapControls: [string, React.ReactNode][] = [
  ["Vollbild", <path key="p" d="M14 26V14H26M34 14H46V26M46 34V46H34M26 46H14V34" strokeWidth="6" />],
  ["Vergrößern", <path key="p" d="M19 35H43M31 23V47" strokeWidth="4" />],
  ["Verkleinern", <path key="p" d="M19 35H43" strokeWidth="4" />],
  ["Ausschnitt", <path key="p" d="M16 16H44V44H16ZM30 11V22M30 38V49M11 30H22M38 30H49" strokeWidth="2" />],
  ["Standort", <g key="p" strokeWidth="2"><circle cx="30" cy="30" r="15" /><circle cx="30" cy="30" r="3.500" fill="#000" /><path d="M30 10V21M30 39V50M10 30H21M39 30H50" /></g>],
];

function NumberField({ id, label, value }: { id: string; label: string; value: string }) {
  return (
    <div>
      <label htmlFor={id} className="block font-bold">{label}</label>
      <div className="mt-2.5 flex h-[72px] items-center border-2 border-[#c3c9d4] bg-[#f3f5fb] px-6 shadow-[inset_0_2px_2px_rgba(0,0,0,0.08)]">
        <input id={id} type="text" inputMode="decimal" defaultValue={value} className="min-w-0 flex-1 bg-transparent outline-none" />
        <div className="flex h-9 w-9 flex-col items-center justify-center bg-[#e8e8ed] text-[#8e8e99]">
          <button type="button" aria-label={`${label} erhöhen`} className="flex h-4 items-center"><ChevronUp size={24} strokeWidth={3} /></button>
          <button type="button" aria-label={`${label} verringern`} className="flex h-4 items-center"><ChevronDown size={24} strokeWidth={3} /></button>
        </div>
      </div>
    </div>
  );
}

export default function App() {
  return (
    <div className="grid min-h-screen grid-cols-[606fr_840fr] gap-[60px] bg-[#9da3af] pt-[3px] font-['Inter',sans-serif] text-[29px] leading-[44px] text-[#36414f]">
      <main className="min-w-0">
        <nav className="flex h-[88px] justify-end gap-1 border-b-2 border-white">
          <a href="#funktionen" className="flex items-center gap-2 rounded-t-lg bg-[#d1d5df] px-8 pt-1">
            <FaWrench size={30} />
            Funktionen
          </a>
          <a href="#artikel" className="flex items-center gap-2 rounded-t-lg bg-[#d1d5df] px-8 pt-1">
            Artikel anzeigen
            <ExternalIcon />
          </a>
        </nav>
        <div className="mt-11 h-[72px] bg-[#ddebf4]" />
        <section className="mt-11 border-r-2 border-b-2 border-[#dfe3e8] bg-white shadow-[0_2px_2px_rgba(0,0,0,0.06)]">
          <header className="flex h-[87px] items-center justify-end gap-2 bg-[#dfe3e8] pr-[30px] text-2xl">
            <div className="flex h-12">
              <button type="button" className="rounded-l-sm bg-[#72b189] px-3 text-white">editieren</button>
              <button type="button" className="rounded-r-sm border-2 border-[#bb4d43] bg-[#c95b54] px-2.5 text-white">löschen</button>
            </div>
            <button type="button" className="h-12 rounded-sm border-2 border-[#c3c9d4] bg-white px-2.5 text-[#56ae72]">online</button>
            <div className="flex h-[50px] rounded-sm border-2 border-[#c3c9d4] bg-white">
              <button type="button" aria-label="Nach oben" className="flex w-[46px] items-center justify-center"><ChevronUp size={36} strokeWidth={3} /></button>
              <button type="button" aria-label="Nach unten" className="flex w-12 items-center justify-center border-l-2 border-[#c3c9d4]"><ChevronDown size={36} strokeWidth={3} /></button>
            </div>
          </header>
          <div className="h-[104px]" />
        </section>
        <div className="mt-11 h-[72px] bg-[#ddebf4]" />
      </main>

      <aside className="min-w-0 border-l-2 border-[#dfe3e8] bg-white">
        <header className="flex h-[87px] items-center gap-2.5 bg-[#dfe3e8] pl-[30px] text-[32px]">
          <FaInfoCircle size={34} />
          <h2>Metadaten</h2>
        </header>
        <div className="pt-[30px] pr-[30px] pb-2 pl-[30px]">
          <dl className="grid grid-cols-[360px_1fr]">
            {meta.map(([k, v]) => (
              <React.Fragment key={k}>
                <dt className="font-bold">{k}</dt>
                <dd>{v}</dd>
              </React.Fragment>
            ))}
            <dt className="font-bold">Status</dt>
            <dd className="flex items-center gap-2 text-[#c2605a]">
              <span className="h-[30px] w-[30px] rounded-full border-3 border-current" />
              offline
            </dd>
          </dl>

          <label htmlFor="name" className="mt-11 block font-bold">Artikelname</label>
          <input id="name" defaultValue="Picker" className="mt-2.5 block h-[72px] w-full border-2 border-[#c3c9d4] bg-[#f3f5fb] px-6 shadow-[inset_0_2px_2px_rgba(0,0,0,0.08)] outline-none" />

          <h3 className="mt-[30px] font-bold">Koordinaten</h3>
          <div className="mt-2.5 border-2 border-[#c3c9d4] bg-[#f3f5fb] px-6 pt-3 pb-3 shadow-[inset_0_2px_2px_rgba(0,0,0,0.08)]">
            <div className="mb-[30px] flex h-[72px] rounded-l-lg border-2 border-[#c3c9d4] shadow-[inset_0_2px_2px_rgba(0,0,0,0.08)]">
              <button type="button" aria-label="Suchen" className="flex w-20 shrink-0 items-center justify-center rounded-l-md border-r-2 border-[#c3c9d4] bg-[#efeff0]"><FaSearch size={30} /></button>
              <input aria-label="Adresse suchen" placeholder="Adresse suchen .... mit Nominatim/OSM" className="min-w-0 flex-1 bg-transparent pl-6 outline-none placeholder:text-[#999b9f]" />
              <span className="flex items-center gap-3 pr-6 text-[32px] font-medium text-[#444]">
                ©
                <span className="h-2 w-0.5 rounded-full bg-[#c5c6cc]" />
              </span>
            </div>
            <NumberField id="lat" label="Breitengrad" value="52,5145075" />
            <div className="h-10" />
            <NumberField id="lng" label="Längengrad" value="13,3501115" />

            <div className="relative mt-10 h-[1000px] border-2 border-[#c3c9d4]">
              <MapDrawing />
              <div className="absolute top-5 left-5 flex flex-col overflow-hidden rounded-lg border-4 border-black/20 bg-white bg-clip-padding">
                {mapControls.map(([name, icon], i) => (
                  <button key={name} type="button" aria-label={name} className={i < 4 ? "h-[60px] w-[60px] border-b-2 border-[#ccc]" : "h-[60px] w-[60px]"}>
                    <svg viewBox="0 0 60 60" className="h-[58px] w-[60px]" fill="none" stroke="#000">{icon}</svg>
                  </button>
                ))}
              </div>
              <button type="button" aria-label="Ebenen" className="absolute top-5 right-5 flex h-24 w-24 items-center justify-center rounded-[10px] border-4 border-black/20 bg-white bg-clip-padding">
                <svg viewBox="0 0 52 52" className="h-[52px] w-[52px]" strokeLinejoin="round">
                  <path d="M0 34 26 19 52 34 26 50Z" fill="#bdbdbd" />
                  <path d="M0 34 26 50 52 34" fill="none" stroke="#666" strokeWidth="1.500" />
                  <path d="M0 26 26 11 52 26 26 42Z" fill="#cfcfcf" />
                  <path d="M0 26 26 42 52 26" fill="none" stroke="#666" strokeWidth="1.500" />
                  <path d="M0 18 26 1 52 18 26 34Z" fill="#f2f2f2" stroke="#ccc" strokeWidth="0.500" />
                  <path d="M8 22 26 10 44 22 26 33Z" fill="#dedede" />
                  <path d="M0 18 26 34 52 18" fill="none" stroke="#5e5e5e" strokeWidth="1.500" />
                </svg>
              </button>
              <div className="absolute right-0 bottom-0 flex items-center bg-white/80 px-2.5 font-['Liberation_Sans',sans-serif] text-[15px] leading-[21px] whitespace-pre text-[#333]">
                <svg viewBox="0 0 15 10" className="mr-1 h-2.5 w-[15px]"><path d="M0 0H15V5H0Z" fill="#4c7be1" /><path d="M0 5H15V10H0Z" fill="#ffd500" /></svg>
                <a href="#leaflet" className="text-[#2a7ab0]">Leaflet</a>
                <span> | Map data © </span>
                <a href="#osm" className="text-[#2a7ab0]">OpenStreetMap contributors</a>
              </div>
            </div>
          </div>
        </div>
      </aside>
    </div>
  );
}
